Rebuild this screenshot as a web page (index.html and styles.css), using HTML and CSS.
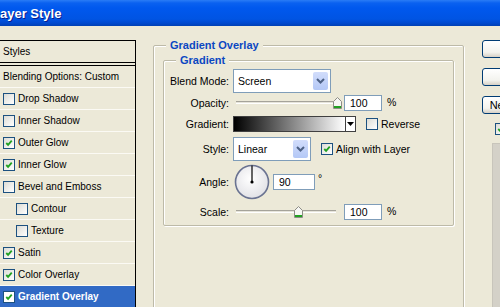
FILE: index.html
```html
<!DOCTYPE html>
<html lang="en">
<head>
  <meta charset="UTF-8">
  <title>Layer Style</title>
  <link rel="stylesheet" href="styles.css">
</head>
<body>
  <div class="titlebar"><span class="title">Layer Style</span></div>

  <div class="main">
    <div class="list">
      <div class="item head">Styles</div>
      <div class="item blend">Blending Options: Custom</div>
      <div class="item"><span class="cb"></span>Drop Shadow</div>
      <div class="item"><span class="cb"></span>Inner Shadow</div>
      <div class="item"><span class="cb on"><svg viewBox="0 0 11 11"><path d="M2.5 5.5 L4.5 7.5 L8.5 3" /></svg></span>Outer Glow</div>
      <div class="item"><span class="cb on"><svg viewBox="0 0 11 11"><path d="M2.5 5.5 L4.5 7.5 L8.5 3" /></svg></span>Inner Glow</div>
      <div class="item"><span class="cb"></span>Bevel and Emboss</div>
      <div class="item sub"><span class="cb"></span>Contour</div>
      <div class="item sub"><span class="cb"></span>Texture</div>
      <div class="item"><span class="cb on"><svg viewBox="0 0 11 11"><path d="M2.5 5.5 L4.5 7.5 L8.5 3" /></svg></span>Satin</div>
      <div class="item"><span class="cb on"><svg viewBox="0 0 11 11"><path d="M2.5 5.5 L4.5 7.5 L8.5 3" /></svg></span>Color Overlay</div>
      <div class="item selected"><span class="cb on"><svg viewBox="0 0 11 11"><path d="M2.5 5.5 L4.5 7.5 L8.5 3" /></svg></span>Gradient Overlay</div>
    </div>

    <fieldset class="group outer">
      <legend>Gradient Overlay</legend>
      <fieldset class="group inner">
        <legend>Gradient</legend>

        <div class="row r-blend">
          <label class="lbl">Blend Mode:</label>
          <div class="combo wide">
            <span class="val">Screen</span>
            <span class="drop"><svg viewBox="0 0 9 6"><path d="M1 1 L4.5 4.5 L8 1" /></svg></span>
          </div>
        </div>

        <div class="row r-opacity">
          <label class="lbl">Opacity:</label>
          <div class="slider">
            <span class="track"></span>
            <svg class="thumb" style="left: 97px" viewBox="0 0 9 12"><path d="M0.5 4.5 L4.5 0.5 L8.5 4.5 V11.5 H0.5 Z" /><rect x="1" y="9" width="7" height="2" /></svg>
          </div>
          <div class="field">100</div>
          <span class="unit">%</span>
        </div>

        <div class="row r-gradient">
          <label class="lbl">Gradient:</label>
          <div class="grad"></div>
          <div class="grad-btn"><svg viewBox="0 0 7 4"><path d="M0 0 H7 L3.5 4 Z" /></svg></div>
          <span class="cb plain"></span>
          <span class="opt">Reverse</span>
        </div>

        <div class="row r-style">
          <label class="lbl">Style:</label>
          <div class="combo narrow">
            <span class="val">Linear</span>
            <span class="drop"><svg viewBox="0 0 9 6"><path d="M1 1 L4.5 4.5 L8 1" /></svg></span>
          </div>
          <span class="cb on plain"><svg viewBox="0 0 11 11"><path d="M2.5 5.5 L4.5 7.5 L8.5 3" /></svg></span>
          <span class="opt">Align with Layer</span>
        </div>

        <div class="row r-angle">
          <label class="lbl">Angle:</label>
          <svg class="dial" viewBox="0 0 36 36">
            <defs>
              <radialGradient id="dialFill" cx="0.45" cy="0.4" r="0.6">
                <stop offset="0" stop-color="#ffffff" />
                <stop offset="1" stop-color="#e2e2e6" />
              </radialGradient>
            </defs>
            <circle cx="18" cy="18" r="16.5" fill="url(#dialFill)" stroke="#6a7391" stroke-width="1.6" />
            <line x1="18" y1="18" x2="18" y2="1.5" stroke="#000" stroke-width="1.2" />
            <circle cx="18" cy="18" r="1.6" fill="#000" />
          </svg>
          <div class="field angle">90</div>
          <span class="deg">°</span>
        </div>

        <div class="row r-scale">
          <label class="lbl">Scale:</label>
          <div class="slider">
            <span class="track"></span>
            <svg class="thumb" style="left: 58px" viewBox="0 0 9 12"><path d="M0.5 4.5 L4.5 0.5 L8.5 4.5 V11.5 H0.5 Z" /><rect x="1" y="9" width="7" height="2" /></svg>
          </div>
          <div class="field">100</div>
          <span class="unit">%</span>
        </div>
      </fieldset>
    </fieldset>

    <div class="side">
      <button class="btn">OK</button>
      <button class="btn">Cancel</button>
      <button class="btn">New Style...</button>
      <div class="preview-opt"><span class="cb on plain"><svg viewBox="0 0 11 11"><path d="M2.5 5.5 L4.5 7.5 L8.5 3" /></svg></span>Preview</div>
      <div class="preview"></div>
    </div>
  </div>
</body>
</html>
```

FILE: styles.css
```css
body {
  margin: 0;
  width: 500px;
  height: 307px;
  overflow: hidden;
  background-color: #ece9d8;
  font-family: "Liberation Sans", Arial, sans-serif;
  font-size: 10.5px;
  color: #000;
}

.titlebar {
  height: 26px;
  background: linear-gradient(#2a7cf6 0, #0a61f0 3px, #0058ee 8px, #0054e3 19px, #0049cf 23px, #0040b4 26px);
  overflow: hidden;
}

.title {
  display: block;
  margin-left: -8px;
  padding-top: 6px;
  font-family: "Liberation Sans", Arial, sans-serif;
  font-weight: bold;
  font-size: 13px;
  line-height: 15px;
  color: #fff;
  text-shadow: 1px 1px 0 #0a1e8c;
}

.main {
  display: flex;
  align-items: flex-start;
}

/* style list */
.list {
  width: 136px;
  margin-top: 14px;
  margin-left: -1px;
  border-top: 1px solid #000;
  border-right: 1px solid #000;
  flex-shrink: 0;
  font-size: 10px;
}

.item {
  display: flex;
  align-items: center;
  height: 21px;
  padding-left: 4px;
  border-bottom: 1px solid #fbfaf4;
  white-space: nowrap;
}

.item.head {
  border-bottom: 1px solid #000;
  margin-bottom: 2px;
}

.item.blend {
  border-top: 1px solid #000;
  height: 21px;
}

.item.sub {
  padding-left: 17px;
}

.item.selected {
  background-color: #316ac5;
  color: #fff;
  font-weight: bold;
}

.cb {
  display: inline-block;
  box-sizing: border-box;
  width: 12px;
  height: 12px;
  margin-right: 3px;
  border: 1px solid #1c5180;
  background: linear-gradient(135deg, #dcdcd5, #fff);
  flex-shrink: 0;
}

.cb svg {
  display: block;
  width: 10px;
  height: 10px;
}

.cb svg path {
  fill: none;
  stroke: #21a121;
  stroke-width: 2;
}

.selected .cb {
  background: #fff;
}

/* group boxes */
.group {
  margin: 0;
  padding: 0;
  min-width: 0;
  border: 1px solid #bdbaa8;
  border-radius: 2px;
  box-shadow: inset 1px 1px 0 #fff, 1px 1px 0 #fff;
}

.group legend {
  margin-left: 12px;
  padding: 0 4px;
  height: 12px;
  line-height: 12px;
  font-size: 11px;
  font-weight: bold;
  color: #0b47c2;
  background-color: #ece9d8;
}

.outer {
  width: 311px;
  height: 290px;
  box-sizing: border-box;
  margin-top: 13px;
  margin-left: 17px;
  padding: 3px 9px 0;
  flex-shrink: 0;
}

.outer > legend {
  margin-left: 3px;
}

.inner {
  box-sizing: border-box;
  height: 172px;
  padding-top: 3px;
}

.row {
  display: flex;
  align-items: center;
}

.r-blend { height: 24px; }
.r-opacity { height: 20px; }
.r-gradient { height: 22px; }
.r-style { height: 28px; }
.r-angle { height: 38px; }
.r-scale { height: 22px; }

.lbl {
  width: 65px;
  margin-right: 4px;
  text-align: right;
  flex-shrink: 0;
}

.combo {
  display: flex;
  align-items: center;
  box-sizing: border-box;
  height: 24px;
  padding: 2px;
  border: 1px solid #7f9db9;
  background-color: #fff;
}

.combo.wide { width: 98px; }
.combo.narrow { width: 78px; }

.combo .val {
  flex: 1;
  padding-left: 2px;
}

.drop {
  display: flex;
  align-items: center;
  justify-content: center;
  width: 15px;
  height: 18px;
  border-radius: 2px;
  background: linear-gradient(#d2ddfb, #b4c8f6);
}

.drop svg {
  width: 9px;
  height: 6px;
}

.drop svg path {
  fill: none;
  stroke: #4d6185;
  stroke-width: 2;
}

.slider {
  position: relative;
  width: 100px;
  height: 16px;
  margin-left: 3px;
  margin-right: 8px;
}

.track {
  display: block;
  margin-top: 6px;
  height: 1px;
  border-top: 1px solid #a5a39a;
  border-bottom: 1px solid #fff;
  background-color: #e6e4da;
}

.thumb {
  position: absolute;
  top: 2px;
  width: 9px;
  height: 12px;
}

.thumb path {
  fill: #f7f7f4;
  stroke: #8d8d86;
  stroke-width: 1;
}

.thumb rect {
  fill: #21a121;
}

.field {
  box-sizing: border-box;
  width: 38px;
  height: 16px;
  padding-left: 5px;
  line-height: 14px;
  border: 1px solid #7f9db9;
  background-color: #fff;
}

.unit {
  margin-left: 5px;
  margin-top: -3px;
}

.grad {
  box-sizing: border-box;
  width: 112px;
  height: 16px;
  border: 1px solid #404040;
  border-right: none;
  background: linear-gradient(to right, #000, #fff);
}

.grad-btn {
  display: flex;
  align-items: center;
  justify-content: center;
  box-sizing: border-box;
  width: 11px;
  height: 16px;
  border: 1px solid #404040;
  background-color: #fff;
}

.grad-btn svg {
  width: 7px;
  height: 4px;
}

.cb.plain {
  width: 12px;
  height: 12px;
  margin-left: 10px;
  margin-right: 3px;
}

.opt {
  white-space: nowrap;
}

.dial {
  width: 36px;
  height: 36px;
  margin-left: 1px;
}

.field.angle {
  width: 42px;
  margin-left: 3px;
}

.deg {
  margin-left: 3px;
  margin-top: -8px;
}

/* right column */
.side {
  margin-top: 14px;
  margin-left: 18px;
  width: 90px;
  flex-shrink: 0;
}

.btn {
  display: block;
  box-sizing: border-box;
  width: 74px;
  height: 18px;
  margin-bottom: 10px;
  padding: 0;
  border: 1px solid #003c74;
  border-radius: 3px;
  background: linear-gradient(#fff, #f3f3ee 70%, #d6d0c5);
  font-family: "Liberation Sans", Arial, sans-serif;
  font-size: 11px;
  text-align: center;
}

.preview-opt {
  display: flex;
  align-items: center;
  margin-top: -2px;
  height: 14px;
}

.preview-opt .cb.plain {
  margin-left: 13px;
}

.preview {
  margin-top: 7px;
  margin-left: 10px;
  height: 200px;
  border-left: 1px solid #c8c5bb;
  border-top: 1px solid #c8c5bb;
  background-color: #d4d1c8;
}
```
